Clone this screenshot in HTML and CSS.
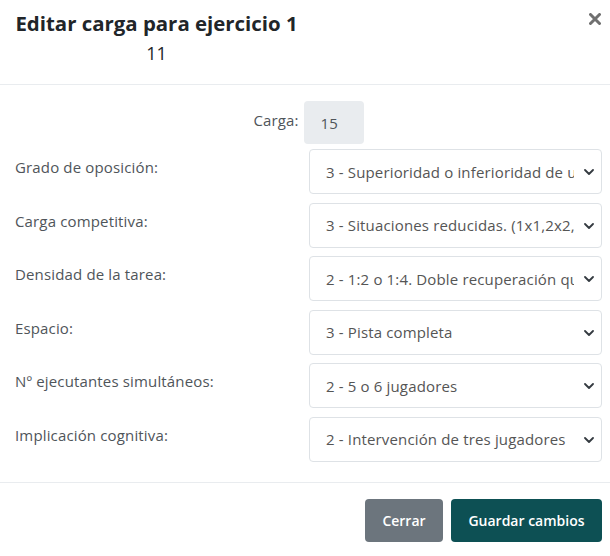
FILE: index.html
```html
<!DOCTYPE html>
<html lang="es">
<head>
<meta charset="utf-8">
<title>Editar carga</title>
<link rel="stylesheet" href="styles.css">
</head>
<body>
<div class="modal">
  <div class="modal-header">
    <h5 class="modal-title">Editar carga para ejercicio 1<br><span class="sub">11</span></h5>
    <button class="close" aria-label="Cerrar"><svg viewBox="0 0 12 12"><path d="M1.5 1.5l9 9M10.5 1.5l-9 9" stroke="#707070" stroke-width="3" stroke-linecap="round"/></svg></button>
  </div>
  <div class="modal-body">
    <div class="carga-row">
      <label class="carga-label">Carga:</label>
      <div class="carga-input">15</div>
    </div>
    <div class="form-row">
      <label class="form-label">Grado de oposición:</label>
      <div class="select-wrap">
        <select class="form-select"><option>3 - Superioridad o inferioridad de uno</option></select>
        <svg class="chev" viewBox="0 0 10 6"><path d="M1 1l4 4 4-4" fill="none" stroke="#343a40" stroke-width="1.8" stroke-linecap="round" stroke-linejoin="round"/></svg>
      </div>
    </div>
    <div class="form-row">
      <label class="form-label">Carga competitiva:</label>
      <div class="select-wrap">
        <select class="form-select"><option>3 - Situaciones reducidas. (1x1,2x2,3x3)</option></select>
        <svg class="chev" viewBox="0 0 10 6"><path d="M1 1l4 4 4-4" fill="none" stroke="#343a40" stroke-width="1.8" stroke-linecap="round" stroke-linejoin="round"/></svg>
      </div>
    </div>
    <div class="form-row">
      <label class="form-label">Densidad de la tarea:</label>
      <div class="select-wrap">
        <select class="form-select"><option>2 - 1:2 o 1:4. Doble recuperación que trabajo</option></select>
        <svg class="chev" viewBox="0 0 10 6"><path d="M1 1l4 4 4-4" fill="none" stroke="#343a40" stroke-width="1.8" stroke-linecap="round" stroke-linejoin="round"/></svg>
      </div>
    </div>
    <div class="form-row">
      <label class="form-label">Espacio:</label>
      <div class="select-wrap">
        <select class="form-select"><option>3 - Pista completa</option></select>
        <svg class="chev" viewBox="0 0 10 6"><path d="M1 1l4 4 4-4" fill="none" stroke="#343a40" stroke-width="1.8" stroke-linecap="round" stroke-linejoin="round"/></svg>
      </div>
    </div>
    <div class="form-row">
      <label class="form-label">Nº ejecutantes simultáneos:</label>
      <div class="select-wrap">
        <select class="form-select"><option>2 - 5 o 6 jugadores</option></select>
        <svg class="chev" viewBox="0 0 10 6"><path d="M1 1l4 4 4-4" fill="none" stroke="#343a40" stroke-width="1.8" stroke-linecap="round" stroke-linejoin="round"/></svg>
      </div>
    </div>
    <div class="form-row">
      <label class="form-label">Implicación cognitiva:</label>
      <div class="select-wrap">
        <select class="form-select"><option>2 - Intervención de tres jugadores</option></select>
        <svg class="chev" viewBox="0 0 10 6"><path d="M1 1l4 4 4-4" fill="none" stroke="#343a40" stroke-width="1.8" stroke-linecap="round" stroke-linejoin="round"/></svg>
      </div>
    </div>
  </div>
  <div class="modal-footer">
    <button class="btn btn-secondary">Cerrar</button>
    <button class="btn btn-primary">Guardar cambios</button>
  </div>
</div>
</body>
</html>
```
FILE: styles.css
```css
* { box-sizing: border-box; }
html, body { margin: 0; padding: 0; background: #fff; }
body { font-family: "Open Sans", "Noto Sans", sans-serif; color: #212529; width: 610px; }

.modal { width: 610px; }

.modal-header {
  height: 85px;
  border-bottom: 1px solid #e9ecef;
  display: flex;
  align-items: flex-start;
  padding: 9px 10px 0 15px;
  position: relative;
}
.modal-title {
  margin: 0;
  width: 283px;
  text-align: center;
  font-size: 20.4px;
  font-weight: 700;
  line-height: 29px;
  color: #212529;
  white-space: nowrap;
}
.modal-title .sub { font-weight: 400; font-size: 18px; }
.close {
  position: absolute;
  right: 9px;
  top: 13px;
  border: 0;
  background: none;
  padding: 0;
  width: 12px;
  height: 12px;
  display: flex;
}
.close svg { width: 12px; height: 12px; }

.modal-body {
  padding: 16px 8px 20px 15px;
  display: flex;
  flex-direction: column;
  gap: 8.6px;
}
.carga-row {
  display: flex;
  justify-content: center;
  align-items: flex-start;
  gap: 5px;
  margin-bottom: -3.6px;
}
.carga-label {
  font-size: 15px;
  letter-spacing: 0.15px;
  color: #4f555a;
  padding-top: 9px;
}
.carga-input {
  width: 60px;
  height: 43px;
  background: #e9ecef;
  border-radius: 4px;
  font-size: 15px;
  color: #4f555a;
  padding: 12px 0 0 17px;
}

.form-row {
  display: flex;
  justify-content: space-between;
  align-items: flex-start;
}
.form-label {
  font-size: 15px;
  letter-spacing: 0.15px;
  color: #4f555a;
  padding-top: 8px;
}
.select-wrap {
  position: relative;
  width: 293px;
  height: 45px;
}
.form-select {
  appearance: none;
  -webkit-appearance: none;
  width: 100%;
  height: 45px;
  border: 1px solid #dee2e6;
  border-radius: 4px;
  background: #fff;
  font-family: inherit;
  font-size: 15px;
  letter-spacing: 0.15px;
  color: #555;
  padding: 0 27px 0 16px;
  outline: none;
}
.chev {
  position: absolute;
  right: 8px;
  top: 20px;
  width: 10px;
  height: 6px;
  pointer-events: none;
}

.modal-footer {
  border-top: 1px solid #e9ecef;
  display: flex;
  justify-content: flex-end;
  gap: 8px;
  padding: 16px 8px 14px 15px;
}
.btn {
  height: 43px;
  border: 0;
  border-radius: 4px;
  color: #fff;
  font-family: inherit;
  font-size: 14px;
  font-weight: 600;
  padding: 0;
}
.btn-secondary { background: #6c757d; width: 78px; }
.btn-primary { background: #0d5054; width: 151px; }
```
